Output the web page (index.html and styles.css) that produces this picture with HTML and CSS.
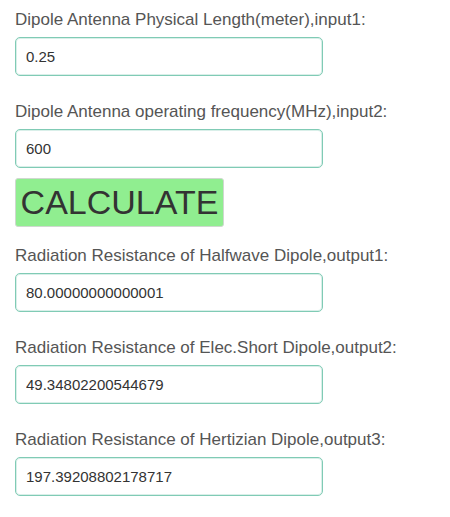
FILE: index.html
```html
<!DOCTYPE html>
<html lang="en">
<head>
  <meta charset="UTF-8">
  <meta name="viewport" content="width=device-width, initial-scale=1.0">
  <title>Dipole Antenna Calculator</title>
  <link rel="stylesheet" href="styles.css">
</head>
<body>
<div class="calc">
  <div class="field">
    <label for="input1">Dipole Antenna Physical Length(meter),input1:</label>
    <input type="text" id="input1" value="0.25">
  </div>
  <div class="field">
    <label for="input2">Dipole Antenna operating frequency(MHz),input2:</label>
    <input type="text" id="input2" value="600">
  </div>
  <button type="button" class="calc-btn">CALCULATE</button>
  <div class="field">
    <label for="output1">Radiation Resistance of Halfwave Dipole,output1:</label>
    <input type="text" id="output1" value="80.00000000000001">
  </div>
  <div class="field">
    <label for="output2">Radiation Resistance of Elec.Short Dipole,output2:</label>
    <input type="text" id="output2" value="49.34802200544679">
  </div>
  <div class="field">
    <label for="output3">Radiation Resistance of Hertizian Dipole,output3:</label>
    <input type="text" id="output3" value="197.39208802178717">
  </div>
</div>
</body>
</html>
```
FILE: styles.css
```css
*{
  box-sizing: border-box;
}
body{
  margin: 0;
  padding: 10px 15px;
  font-family: "Liberation Sans", Arial, sans-serif;
  background-color: #fff;
}
.field{
  margin-bottom: 26px;
}
.field label{
  display: block;
  font-size: 17px;
  line-height: 20px;
  color: #555;
  margin-bottom: 7px;
}
.field input{
  display: block;
  width: 308px;
  height: 39px;
  padding: 0 10px;
  font-family: "Liberation Sans", Arial, sans-serif;
  font-size: 15px;
  color: #333;
  border: 1px solid #80cbb5;
  border-radius: 5px;
  box-shadow: inset 0 0 0 1px rgba(128, 203, 181, 0.3);
  outline: none;
}
.calc-btn{
  display: block;
  margin: -16px 0 19px;
  width: 209px;
  height: 49px;
  padding: 0;
  font-family: "Liberation Sans", Arial, sans-serif;
  font-size: 34px;
  color: #333;
  background-color: #90ee90;
  border: 1px solid #cfd8cf;
  border-radius: 3px;
}
```
